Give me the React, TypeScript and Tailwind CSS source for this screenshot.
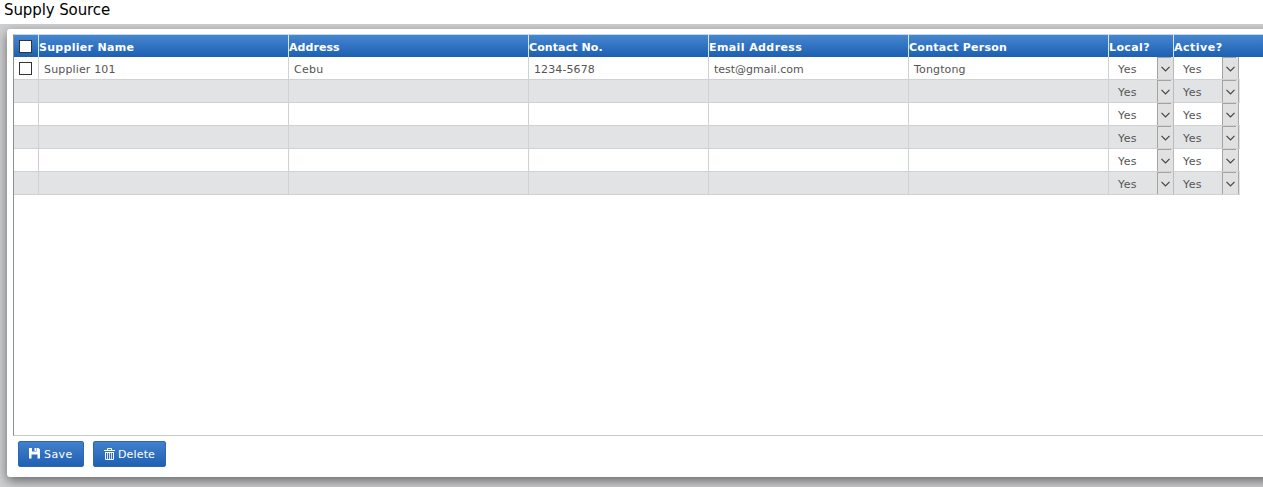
const columns = [
  { label: "Supplier Name", width: "w-[250px]", head: "tracking-[0.3px]", body: "tracking-[0.15px]" },
  { label: "Address", width: "w-[240px]", head: "tracking-[0.05px]", body: "tracking-[0.3px]" },
  { label: "Contact No.", width: "w-[180px]", head: "tracking-[0.1px]", body: "tracking-[0.1px]" },
  { label: "Email Address", width: "w-[200px]", head: "tracking-[0.4px]", body: "tracking-normal" },
  { label: "Contact Person", width: "w-[200px]", head: "tracking-[0.25px]", body: "tracking-[0.15px]" },
  { label: "Local?", width: "w-[65px]", head: "tracking-[0.4px]", body: "tracking-normal" },
  { label: "Active?", width: "w-[66px]", head: "tracking-[0.5px]", body: "tracking-normal" },
];

const rows = [
  ["Supplier 101", "Cebu", "1234-5678", "test@gmail.com", "Tongtong"],
  ["", "", "", "", ""],
  ["", "", "", "", ""],
  ["", "", "", "", ""],
  ["", "", "", "", ""],
  ["", "", "", "", ""],
];

function Checkbox() {
  return (
    <span role="checkbox" aria-checked="false" className="block h-[13px] w-[13px] border border-[#333] bg-white" />
  );
}

function Select({ last = false }: { last?: boolean }) {
  return (
    <div
      className={`flex h-full shrink-0 border-b border-l border-b-[#d0d1d3] ${
        last ? "w-[67px] border-l-[#b9babc]" : "w-[65px] border-l-[#d0d1d3]"
      }`}
    >
      <span className="flex w-12 items-center pl-[9px] pt-[4px] tracking-[0.4px]">Yes</span>
      <span className="flex h-[22px] w-[14px] shrink-0 items-center justify-center border-l border-t border-l-[#a3a3a3] border-t-[#a3a3a3] bg-[#e1e1e1] pl-px">
        <svg width="9" height="6" viewBox="0 0 9 6" fill="none" stroke="#444" strokeWidth="1.2" className="shrink-0">
          <path d="M0.5 0.8 4.5 4.8 8.5 0.8" />
        </svg>
      </span>
      <span className="h-[22px] w-[2px] shrink-0 bg-[#e1e1e1]" />
      {last && <span className="h-[22px] w-px bg-[#a9a9a9]" />}
    </div>
  );
}

function SaveIcon() {
  return (
    <svg width="11" height="11" viewBox="0 0 11 11" fill="#fff" className="mb-px">
      <path fillRule="evenodd" d="M0 0H3V3.5H7.5V0H9.5L11 1.5V10.5H8.5V6.5H2.5V10.5H0ZM5.5 0H7V3H5.5Z" />
    </svg>
  );
}

function TrashIcon() {
  return (
    <svg width="11" height="12" viewBox="0 0 11 12" fill="none" stroke="#fff" className="mb-px">
      <path d="M3.5 2V.5H7.5V2M0 2.5H11M1.5 4.5H9.5M1.5 4V11.5H9.5V4" />
      <path d="M3.5 5V11M5.5 5V11M7.5 5V11" strokeOpacity=".8" />
    </svg>
  );
}

const buttonClass =
  "flex h-[26px] items-center rounded-[2px] border border-[#2b68b4] bg-linear-to-b from-[#4080cc] to-[#1f60b3] text-[11px] text-white";

export default function App() {
  return (
    <div className="h-[487px] w-full overflow-hidden bg-[#cfd0d2] font-['DejaVu_Sans',Verdana,sans-serif] text-[11px] text-[#555]">
      <header className="h-6 bg-white pl-1 text-[15px] leading-[20px] tracking-[-0.1px] text-black">Supply Source</header>
      <div className="h-[463px] overflow-hidden pl-[7px] pt-[5px]">
        <main className="h-[448px] w-[1280px] rounded-[3px] bg-white pl-[6px] pt-[5px] shadow-[0_4px_12px_0_rgba(0,0,0,0.5)]">
          <section className="h-[402px] border border-b-[#c8c8c8] border-l-[#8e8f91] border-t-[#c7d6e8]">
            <div className="flex h-[22px] bg-linear-to-b from-[#4687d1] to-[#1c5fb1] font-bold text-white">
              <div className="flex w-6 shrink-0 items-center pl-[5px]">
                <Checkbox />
              </div>
              {columns.map((c) => (
                <div key={c.label} className={`${c.width} ${c.head} flex shrink-0 items-center whitespace-nowrap border-l border-[#d9e4f1] pt-[4px]`}>
                  {c.label}
                </div>
              ))}
            </div>
            {rows.map((row, i) => (
              <div key={i} className={`flex h-[23px] w-[1226px] ${i % 2 ? "bg-[#e2e3e5]" : "bg-white"}`}>
                <div className="flex w-6 shrink-0 items-center border-b border-[#d0d1d3] pl-[5px]">
                  {i === 0 && <Checkbox />}
                </div>
                {row.map((cell, j) => (
                  <div key={j} className={`${columns[j].width} ${columns[j].body} flex shrink-0 items-center border-b border-l border-[#d0d1d3] pl-[5px] pt-[4px]`}>
                    {cell}
                  </div>
                ))}
                <Select />
                <Select last />
              </div>
            ))}
          </section>
          <footer className="flex gap-[9px] pl-[5px] pt-[5px]">
            <button className={`${buttonClass} w-[66px] gap-[4px] pl-[10px] tracking-[0.4px]`}>
              <SaveIcon />
              <span className="pt-[3px]">Save</span>
            </button>
            <button className={`${buttonClass} w-[73px] gap-[3px] pl-[10px] tracking-[0.15px]`}>
              <TrashIcon />
              <span className="pt-[3px]">Delete</span>
            </button>
          </footer>
        </main>
      </div>
    </div>
  );
}
